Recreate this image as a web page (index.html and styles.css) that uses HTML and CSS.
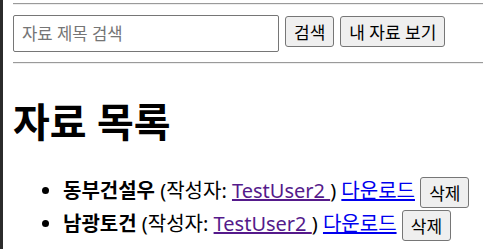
FILE: index.html
```html
<!DOCTYPE html>
<html lang="ko">
<head>
<meta charset="utf-8">
<title>자료 목록</title>
<link rel="stylesheet" href="styles.css">
</head>
<body>
<hr class="rule">
<form class="search">
  <input class="search-input" type="text" placeholder="자료 제목 검색">
  <button class="btn" type="button">검색</button>
  <button class="btn" type="button">내 자료 보기</button>
</form>
<hr class="rule">
<h1 class="title">자료 목록</h1>
<ul class="list">
  <li class="item"><strong>동부건설우</strong> (작성자: <a class="user" href="#">TestUser2 </a>) <a class="dl" href="#d1">다운로드</a> <button class="btn btn-del" type="button">삭제</button></li>
  <li class="item"><strong>남광토건</strong> (작성자: <a class="user" href="#">TestUser2 </a>) <a class="dl" href="#d2">다운로드</a> <button class="btn btn-del" type="button">삭제</button></li>
</ul>
</body>
</html>
```
FILE: styles.css
```css
html, body {
  margin: 0;
  background: #fff;
}
body {
  border-left: 3px solid #2b2b2b;
  min-height: 249px;
  box-sizing: border-box;
  padding-left: 10px;
  font-family: "Noto Sans", "Noto Sans CJK KR", sans-serif;
  font-size: 20px;
  color: #000;
}
.rule {
  margin: 3px 0 0;
  border: 0;
  border-top: 1px solid #9a9a9a;
  border-bottom: 1px solid #eeeeee;
  height: 0;
}
.search {
  margin: 10px 0 10px;
  display: flex;
  align-items: flex-start;
  gap: 6px;
}
.search-input {
  width: 266px;
  height: 37px;
  box-sizing: border-box;
  border: 1px solid #767676;
  border-radius: 2px;
  padding: 0 8px;
  font: 16.67px "Noto Sans", "Noto Sans CJK KR", sans-serif;
}
.search-input::placeholder { color: #757575; }
.btn {
  font: 17px "Noto Sans", "Noto Sans CJK KR", sans-serif;
  background: #efefef;
  border: 1px solid #767676;
  border-radius: 3px;
  padding: 0 8px;
  height: 31px;
  margin-top: 1px;
  color: #000;
}
.title {
  font-size: 40px;
  font-weight: bold;
  margin: 32px 0 0;
  line-height: 52px;
}
.list {
  margin: 27px 0 0;
  padding-left: 50px;
}
.item {
  line-height: 32px;
}
.user { color: #551a8b; }
.dl { color: #0000ee; }
.btn-del {
  height: 31px;
  padding: 0 8px;
  vertical-align: middle;
  margin-top: 0;
}
```
